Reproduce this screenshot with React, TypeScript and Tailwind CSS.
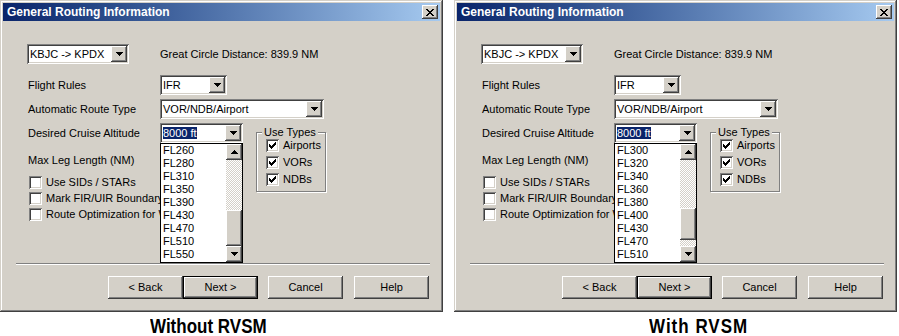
import React from 'react';

const raised =
  'shadow-[inset_-1px_-1px_#404040,inset_1px_1px_#ffffff,inset_-2px_-2px_#808080,inset_2px_2px_#d4d0c8]';
const sunken =
  'shadow-[inset_1px_1px_#808080,inset_-1px_-1px_#ffffff,inset_2px_2px_#404040,inset_-2px_-2px_#d4d0c8]';
const frame =
  'shadow-[inset_-1px_-1px_#404040,inset_1px_1px_#d4d0c8,inset_-2px_-2px_#808080,inset_2px_2px_#ffffff]';

const ARROW_DOWN = ['xxxxxxx', '.xxxxx.', '..xxx..', '...x...'];
const ARROW_UP = ['...x...', '..xxx..', '.xxxxx.', 'xxxxxxx'];
const CLOSE_X = ['xx....xx', '.xx..xx.', '..xxxx..', '...xx...', '..xxxx..', '.xx..xx.', 'xx....xx'];
const CHECK = ['......x', '.....xx', 'x...xxx', 'xx.xxx.', 'xxxxx..', '.xxx...', '..x....'];

// tiny pixel glyphs, drawn like the classic windows bitmaps
const Pixels = ({ rows }: { rows: string[] }) => (
  <svg width={rows[0].length} height={rows.length} shapeRendering="crispEdges" className="block">
    {rows.flatMap((r, y) =>
      [...r].map((c, x) => (c === 'x' ? <rect key={`${x}-${y}`} x={x} y={y} width="1" height="1" fill="#000" /> : null))
    )}
  </svg>
);

const ArrowBtn = ({ up }: { up?: boolean }) => (
  <div className={`flex h-[16px] w-[16px] shrink-0 items-center justify-center bg-[#d4d0c8] ${raised}`}>
    <Pixels rows={up ? ARROW_UP : ARROW_DOWN} />
  </div>
);

const Combo = ({ className, value, selected }: { className: string; value: string; selected?: boolean }) => (
  <div className={`flex h-[20px] items-center bg-white p-[2px] ${sunken} ${className}`}>
    <div className="flex-1 overflow-hidden whitespace-nowrap pl-[1px]">
      <span className={selected ? 'bg-[#0a246a] text-white' : ''}>{value}</span>
    </div>
    <ArrowBtn />
  </div>
);

const CheckBox = ({ checked }: { checked?: boolean }) => (
  <div className={`flex h-[13px] w-[13px] shrink-0 items-center justify-center bg-white ${sunken}`}>
    {checked && <Pixels rows={CHECK} />}
  </div>
);

interface DialogProps {
  items: string[];
  thumb: string;
  rest: string;
}

const Dialog = ({ items, thumb, rest }: DialogProps) => (
  <div className={`flex h-[312px] w-[443px] shrink-0 flex-col bg-[#d4d0c8] ${frame}`}>
    {/* title bar */}
    <div className="mx-[3px] mt-[3px] flex h-[18px] items-center justify-between bg-linear-to-r from-[#0a246a] to-[#a6caf0] pl-[4px] pr-[2px]">
      <span className="text-[12px] font-bold leading-none text-white">General Routing Information</span>
      <div className={`flex h-[14px] w-[16px] items-center justify-center bg-[#d4d0c8] ${raised}`}>
        <Pixels rows={CLOSE_X} />
      </div>
    </div>

    <div className="pl-[16px] pr-[13px] pt-[23px]">
      <div className="pl-[11px]">
        <div className="flex items-center">
          <Combo className="w-[102px]" value="KBJC -> KPDX" />
          <span className="ml-[31px]">Great Circle Distance: 839.9 NM</span>
        </div>
        <div className="mt-[11px] flex items-center">
          <span className="w-[133px] pl-[1px]">Flight Rules</span>
          <Combo className="w-[67px]" value="IFR" />
        </div>
        <div className="mt-[4px] flex items-center">
          <span className="w-[133px] pl-[1px]">Automatic Route Type</span>
          <Combo className="w-[164px]" value="VOR/NDB/Airport" />
        </div>

        <div className="mt-[4px] flex items-start">
          <div className="w-[228px]">
            <div className="flex items-center">
              <span className="w-[133px] pl-[1px]">Desired Cruise Altitude</span>
              <div className="relative">
                <Combo className="w-[83px]" value="8000 ft" selected />
                {/* open drop-down list */}
                <div className="absolute left-0 top-[20px] z-10 flex h-[120px] w-[83px] border border-black bg-white">
                  <div className="flex-1 pl-[2px]">
                    {items.map((it) => (
                      <div key={it} className="h-[13px] leading-[13px]">
                        {it}
                      </div>
                    ))}
                  </div>
                  <div className="flex w-[16px] flex-col bg-[repeating-conic-gradient(#d4d0c8_0_25%,#ffffff_0_50%)] bg-[length:2px_2px]">
                    <ArrowBtn up />
                    <div className="flex flex-1 flex-col">
                      <div className={`w-[16px] bg-[#d4d0c8] ${raised} ${thumb}`} />
                      <div className={rest} />
                    </div>
                    <ArrowBtn />
                  </div>
                </div>
              </div>
            </div>
            <div className="mt-[8px] flex h-[18px] items-center pl-[1px]">Max Leg Length (NM)</div>
            <div className="mt-[5px] flex flex-col">
              {['Use SIDs / STARs', 'Mark FIR/UIR Boundary Crossings', 'Route Optimization for Winds'].map((t) => (
                <div key={t} className="flex h-[16px] w-[133px] items-center gap-[4px] overflow-hidden whitespace-nowrap pl-[2px]">
                  <CheckBox />
                  <span>{t}</span>
                </div>
              ))}
            </div>
          </div>

          {/* Use Types group */}
          <div className="relative ml-[1px] mt-[9px] h-[60px] w-[70px] border border-[#808080] shadow-[1px_1px_#ffffff,inset_1px_1px_#ffffff] pl-[9px] pt-[4px]">
            <span className="absolute -top-[8px] left-[5px] bg-[#d4d0c8] px-[2px] leading-[14px]">Use Types</span>
            {['Airports', 'VORs', 'NDBs'].map((t) => (
              <div key={t} className="flex h-[17px] items-center gap-[4px]">
                <CheckBox checked />
                <span>{t}</span>
              </div>
            ))}
          </div>
        </div>
      </div>

      <div className="mt-[41px] h-[2px] border-t border-t-[#808080] border-b border-b-white" />

      <div className="mr-[1px] mt-[11px] flex justify-end">
        <button className={`h-[23px] w-[75px] bg-[#d4d0c8] ${raised}`}>&lt; Back</button>
        <button className={`h-[23px] w-[75px] border border-black bg-[#d4d0c8] ${raised}`}>Next &gt;</button>
        <button className={`ml-[10px] h-[23px] w-[75px] bg-[#d4d0c8] ${raised}`}>Cancel</button>
        <button className={`ml-[11px] h-[23px] w-[75px] bg-[#d4d0c8] ${raised}`}>Help</button>
      </div>
    </div>
  </div>
);

export default function App() {
  return (
    <div className="flex h-[336px] w-[899px] gap-[11px] overflow-hidden bg-white font-['Liberation_Sans',Arial,sans-serif] text-[11px] text-black">
      <div className="flex flex-col">
        <Dialog
          items={['FL260', 'FL280', 'FL310', 'FL350', 'FL390', 'FL430', 'FL470', 'FL510', 'FL550']}
          thumb="mt-[50px] h-[36px]"
          rest="h-0"
        />
        <div className="mt-[6px] pl-[150px]">
          <span className="inline-block scale-y-[1.2] text-[17px] font-bold leading-[17px]">Without RVSM</span>
        </div>
      </div>
      <div className="flex flex-col">
        <Dialog
          items={['FL300', 'FL320', 'FL340', 'FL360', 'FL380', 'FL400', 'FL430', 'FL470', 'FL510']}
          thumb="mt-[48px] h-[32px]"
          rest="h-[6px]"
        />
        <div className="mt-[6px] pl-[195px]">
          <span className="inline-block scale-y-[1.2] text-[17px] font-bold leading-[17px] tracking-[1px]">With RVSM</span>
        </div>
      </div>
    </div>
  );
}
